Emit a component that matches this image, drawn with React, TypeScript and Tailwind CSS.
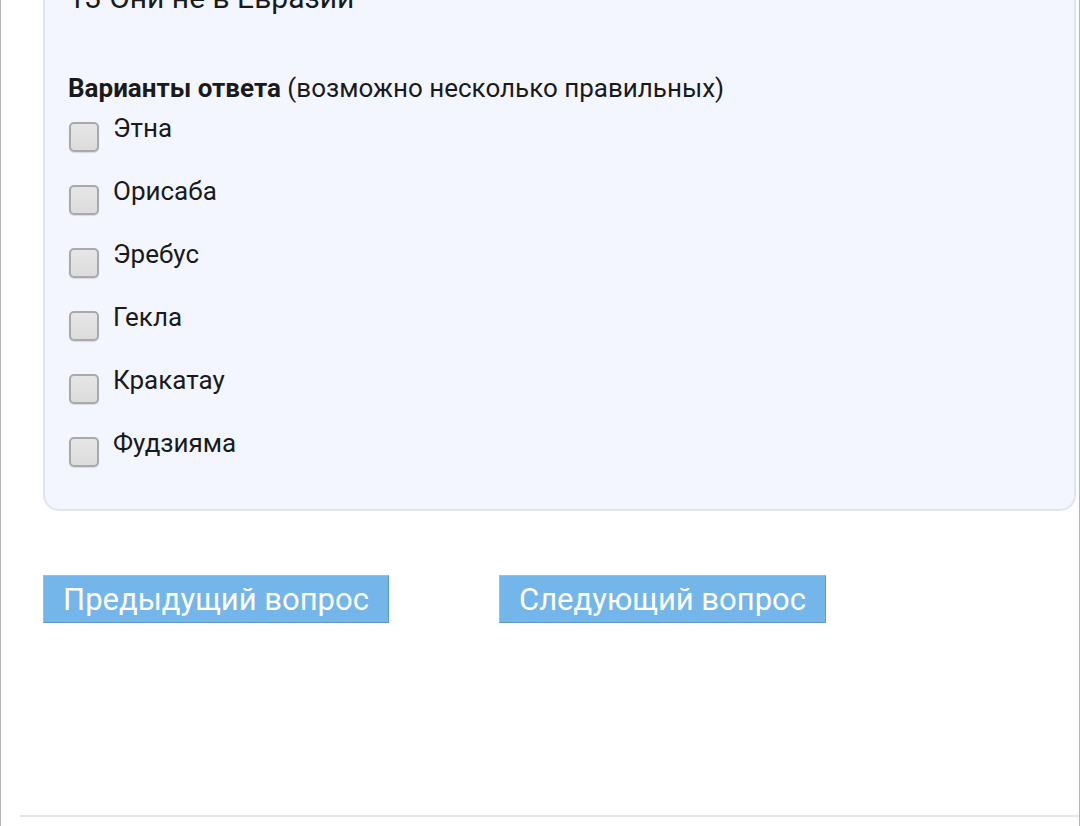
import React from 'react';

const options = ['Этна', 'Орисаба', 'Эребус', 'Гекла', 'Кракатау', 'Фудзияма'];

const Checkbox: React.FC = () => (
  <span className="mt-[9px] block h-[30px] w-[30px] shrink-0 rounded-[5px] border-2 border-[#a9a9a9] bg-gradient-to-b from-[#e6e6e6] to-[#dcdcdc] shadow-[0_1px_1px_rgba(0,0,0,0.12)]" />
);

export default function App() {
  return (
    <div
      className="h-[826px] w-[1080px] overflow-hidden border-x border-[#b5b5b5] bg-white"
      style={{ fontFamily: 'Roboto, "Noto Sans", sans-serif' }}
    >
      <div className="flex h-full flex-col">
        {/* question card */}
        <div className="ml-[42px] -mt-[30px] mr-[3px] rounded-b-[16px] border-2 border-t-0 border-[#e1e5ee] bg-[#f3f6fe] pb-[42px] pl-[23px] pt-[10px]">
          <p className="text-[30px] leading-[36px] text-[#1a1a1a]">13 Они не в Евразии</p>
          <p className="mt-[57px] text-[26px] leading-[30px] text-[#1a1a1a]">
            <span className="font-bold">Варианты ответа</span> (возможно несколько правильных)
          </p>
          <ul className="mt-[10px] flex flex-col gap-[24px]">
            {options.map((o) => (
              <li key={o} className="flex items-start gap-[14px] pl-[1px]">
                <Checkbox />
                <span className="text-[26px] leading-[30px] text-[#1a1a1a]">{o}</span>
              </li>
            ))}
          </ul>
        </div>

        {/* navigation */}
        <div className="ml-[42px] mt-[64px] flex gap-[110px]">
          <button className="h-[48px] w-[346px] border border-[#5b9bd0] border-t-[#8cc4ee] border-l-[#8cc4ee] bg-[#74b6e9] text-[31px] leading-none text-white">
            Предыдущий вопрос
          </button>
          <button className="h-[48px] w-[327px] border border-[#5b9bd0] border-t-[#8cc4ee] border-l-[#8cc4ee] bg-[#74b6e9] text-[31px] leading-none text-white">
            Следующий вопрос
          </button>
        </div>

        <div className="mt-auto mb-[9px] ml-[19px] h-[2px] bg-[#e6e6e6]" />
      </div>
    </div>
  );
}
